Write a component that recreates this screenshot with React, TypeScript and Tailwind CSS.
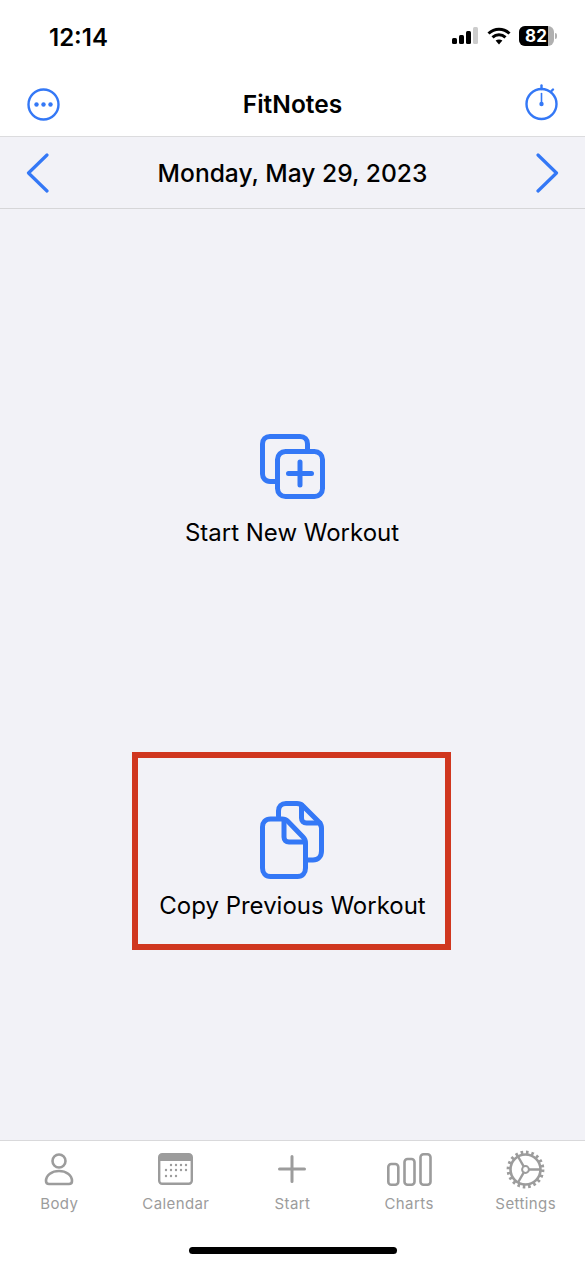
import React from "react";

const BLUE = "#3478f6";

function StatusBar() {
    return (
        <div className="h-[72px] flex items-start justify-between pl-[49px] pr-[28px] pt-[23px] bg-white">
            <span className="text-[24px] leading-[30px] font-semibold text-black">12:14</span>
            <div className="flex items-center gap-[8px] pt-[3px]">
                <svg width="27" height="18" viewBox="0 0 27 18">
                    <rect x="0" y="11" width="5" height="6" rx="1.5" fill="#000" />
                    <rect x="7" y="8" width="5" height="9" rx="1.5" fill="#000" />
                    <rect x="14" y="4" width="5" height="13" rx="1.5" fill="#000" />
                    <rect x="21" y="0" width="5" height="17" rx="1.5" fill="#ccc" />
                </svg>
                <svg width="24" height="18" viewBox="0 0 24 18" fill="none" stroke="#000" strokeWidth="3">
                    <path d="M1.5 6.5C7.5 .8 16.5 .8 22.5 6.5" />
                    <path d="M5.5 10.3C9.3 6.9 14.7 6.9 18.5 10.3" />
                    <path d="M12 17.5L8.6 13.6C10.6 12 13.4 12 15.4 13.6Z" fill="#000" stroke="none" />
                </svg>
                <div className="flex items-center gap-[1px]">
                    <div className="relative w-[35px] h-[20px] rounded-[6px] bg-[#b0b0b0] overflow-hidden">
                        <div className="absolute inset-y-0 left-0 w-[29px] bg-black" />
                        <span className="absolute inset-0 flex items-center justify-center pr-[1px] text-[17px] font-bold leading-none text-white">82</span>
                    </div>
                    <div className="w-[2px] h-[6px] rounded-r-full bg-[#b0b0b0]" />
                </div>
            </div>
        </div>
    );
}

function Header() {
    return (
        <div className="h-[65px] flex items-center justify-between px-[27px] bg-white border-b border-[#dcdcde]">
            <svg width="33" height="33" viewBox="0 0 33 33" fill="none">
                <circle cx="16.5" cy="16.5" r="15" stroke={BLUE} strokeWidth="2.4" />
                <circle cx="9.5" cy="16.5" r="2.2" fill={BLUE} />
                <circle cx="16.5" cy="16.5" r="2.2" fill={BLUE} />
                <circle cx="23.5" cy="16.5" r="2.2" fill={BLUE} />
            </svg>
            <span className="text-[24.5px] font-semibold leading-none text-black">FitNotes</span>
            <svg width="33" height="38" viewBox="0 0 33 38" fill="none" stroke={BLUE} strokeWidth="2.4" strokeLinecap="round" className="-mt-[4px]">
                <circle cx="16.5" cy="21" r="15" />
                <path d="M16.5 2.5V6" />
                <path d="M28 6.5L26.5 8" />
                <path d="M16.5 10.5V21" strokeWidth="1.6" />
                <circle cx="16.5" cy="21" r="2.2" fill={BLUE} stroke="none" />
            </svg>
        </div>
    );
}

function DateBar() {
    return (
        <div className="h-[72px] flex items-center justify-between px-[26px] bg-[#f2f2f7] border-b border-[#d6d6d8]">
            <svg width="24" height="40" viewBox="0 0 24 40" fill="none" stroke={BLUE} strokeWidth="3.2" strokeLinecap="round" strokeLinejoin="round">
                <path d="M21 2L2.5 20L21 38" />
            </svg>
            <span className="mt-[2px] text-[24.6px] font-medium leading-none text-black">Monday, May 29, 2023</span>
            <svg width="24" height="40" viewBox="0 0 24 40" fill="none" stroke={BLUE} strokeWidth="3.2" strokeLinecap="round" strokeLinejoin="round">
                <path d="M3 2L21.5 20L3 38" />
            </svg>
        </div>
    );
}

function NewWorkoutIcon() {
    return (
        <svg width="65" height="65" viewBox="0 0 65 65" fill="none" stroke={BLUE} strokeWidth="5" strokeLinecap="round" strokeLinejoin="round" className="-ml-[1px]">
            <path d="M15 47.5H10C5.5 47.5 2.5 44 2.5 40V10C2.5 5.5 5.5 2.5 10 2.5H40C44.5 2.5 47.5 5.5 47.5 10V15" />
            <rect x="17.5" y="17.5" width="45" height="45" rx="8" />
            <path d="M40 28V51M28.5 39.5H51.5" />
        </svg>
    );
}

function CopyWorkoutIcon() {
    return (
        <svg width="64" height="78" viewBox="0 0 64 78" fill="none" stroke={BLUE} strokeWidth="5" strokeLinecap="round" strokeLinejoin="round" className="ml-[1px]">
            <path d="M18.5 15V10C18.5 5.5 21.5 2.5 26 2.5H37C39.5 2.5 41.5 3.5 43 5L58 20C60 22 61.5 24 61.5 27V50C61.5 55.5 58 59 53 59H48" />
            <path d="M41.5 4V17C41.5 20 43.5 22 46.5 22H60" />
            <path d="M10.5 18H22C24.5 18 26.5 19 28 20.5L43 36C44.5 37.5 45.5 39.5 45.5 42V67C45.5 72 42.5 75.5 37.5 75.5H10.5C5.5 75.5 2.5 72 2.5 67V26C2.5 21.5 5.5 18 10.5 18Z" />
            <path d="M24 19V36C24 39 26 41 29 41H44" />
        </svg>
    );
}

function Main() {
    return (
        <div className="flex-1 flex flex-col items-center bg-[#f2f2f7] pt-[225px]">
            <NewWorkoutIcon />
            <span className="mt-[18px] mr-[1px] text-[24px] leading-[32px] text-black">Start New Workout</span>
            <div className="mt-[203px] mr-[2px] w-[319px] h-[198px] flex flex-col items-center pt-[43px] border-[6px] border-[#d0371f]">
                <CopyWorkoutIcon />
                <span className="mt-[11px] ml-[2px] text-[24px] leading-[32px] whitespace-nowrap text-black">Copy Previous Workout</span>
            </div>
        </div>
    );
}

const GRAY = "#9c9c9c";

const tabs: { label: string; icon: React.ReactNode }[] = [
    {
        label: "Body",
        icon: (
            <svg width="32" height="34" viewBox="0 0 32 34" fill="none" stroke={GRAY} strokeWidth="2.6">
                <circle cx="16" cy="9" r="6.5" />
                <path d="M3 29C3 23 9 19 16 19C23 19 29 23 29 29C29 31 28 32 26 32H6C4 32 3 31 3 29Z" />
            </svg>
        ),
    },
    {
        label: "Calendar",
        icon: (
            <svg width="35" height="32" viewBox="0 0 35 32" fill="none">
                <rect x="1.2" y="1.2" width="32.6" height="29.6" rx="3" stroke={GRAY} strokeWidth="2.4" />
                <path d="M1 4C1 2 2 1 4 1H31C33 1 34 2 34 4V8H1Z" fill={GRAY} />
                {[[13, 12], [18, 12], [23, 12], [28, 12], [8, 17], [13, 17], [18, 17], [23, 17], [28, 17], [8, 23], [13, 23], [18, 23]].map(([x, y]) => (
                    <circle key={`${x}-${y}`} cx={x} cy={y} r="1.2" fill={GRAY} />
                ))}
            </svg>
        ),
    },
    {
        label: "Start",
        icon: (
            <svg width="30" height="30" viewBox="0 0 30 30" fill="none" stroke={GRAY} strokeWidth="3" strokeLinecap="round">
                <path d="M15 2.5V27.5M2.5 15H27.5" />
            </svg>
        ),
    },
    {
        label: "Charts",
        icon: (
            <svg width="45" height="33" viewBox="0 0 45 33" fill="none" stroke={GRAY} strokeWidth="2.6">
                <rect x="1.3" y="11" width="10" height="20.7" rx="3" />
                <rect x="17.5" y="6" width="10" height="25.7" rx="3" />
                <rect x="33.5" y="1.3" width="10" height="30.4" rx="3" />
            </svg>
        ),
    },
    {
        label: "Settings",
        icon: (
            <svg width="39" height="39" viewBox="0 0 39 39" fill="none" stroke={GRAY}>
                <circle cx="19.5" cy="19.5" r="15" strokeWidth="2.6" />
                {/* teeth: 20 dashes round the ring */}
                <circle cx="19.5" cy="19.5" r="17.2" strokeWidth="3.4" strokeDasharray="2.6 2.8" />
                <circle cx="19.5" cy="19.5" r="3.4" strokeWidth="2" />
                <path d="M22.9 19.5H34M17.8 16.6L12 6.5M17.8 22.4L12 32.5" strokeWidth="2.4" />
            </svg>
        ),
    },
];

function TabBar() {
    return (
        <div className="h-[126px] flex flex-col bg-white border-t border-[#d9d9db]">
            <div className="grid grid-cols-5 px-[1px] pt-[8px]">
                {tabs.map((tab) => (
                    <div key={tab.label} className="flex flex-col items-center">
                        <div className="h-[40px] flex items-center justify-center">{tab.icon}</div>
                        <span className="mt-[5px] text-[15px] leading-[20px] tracking-[0.4px] text-[#9c9c9c]">{tab.label}</span>
                    </div>
                ))}
            </div>
            <div className="mt-auto mb-[12px] mx-auto w-[208px] h-[7px] rounded-full bg-black" />
        </div>
    );
}

export default function App() {
    return (
        <div className="w-[585px] h-[1266px] flex flex-col overflow-hidden bg-white font-['Inter',sans-serif]">
            <StatusBar />
            <Header />
            <DateBar />
            <Main />
            <TabBar />
        </div>
    );
}
